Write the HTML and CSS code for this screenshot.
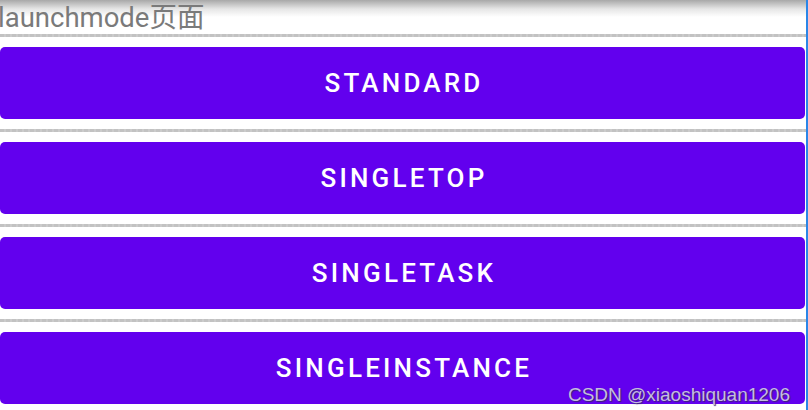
FILE: index.html
```html
<!DOCTYPE html>
<html lang="zh-CN">
<head>
  <meta charset="UTF-8">
  <title>launchmode页面</title>
  <link rel="stylesheet" href="styles.css">
</head>
<body>

<div class="screen">
  <div class="title">launchmode页面</div>

  <div class="line"></div>
  <button class="btn">STANDARD</button>
  <div class="line"></div>
  <button class="btn">SINGLETOP</button>
  <div class="line"></div>
  <button class="btn">SINGLETASK</button>
  <div class="line"></div>
  <button class="btn">SINGLEINSTANCE</button>

  <div class="mark">CSDN @xiaoshiquan1206</div>
</div>

</body>
</html>
```

FILE: styles.css
```css
body {
  margin: 0;
  background: #fff;
  overflow: hidden;
}
.screen {
  position: relative;
  width: 806px;
  height: 410px;
  border-right: 2px solid #2a86e8;
  display: flex;
  flex-direction: column;
  font-family: Roboto, "Noto Sans CJK SC", sans-serif;
}
.title {
  box-sizing: border-box;
  height: 35px;
  padding-top: 2px;
  line-height: 32px;
  font-size: 27.5px;
  color: #7a7a7a;
  text-indent: -2px;
  background: linear-gradient(#a8a8a8, #e6e6e6 9px, #fff 17px);
  white-space: nowrap;
}
.line {
  height: 3px;
  margin-bottom: 10px;
  background: repeating-linear-gradient(90deg, #c2c2c2 0 4px, #cbcbcb 4px 6px);
  flex-shrink: 0;
}
.btn {
  height: 72px;
  margin: 0 1px 10px 0;
  flex-shrink: 0;
  border: none;
  border-radius: 5px;
  background: #6200ee;
  color: #fff;
  font-family: Roboto, sans-serif;
  font-weight: 500;
  font-size: 26px;
  letter-spacing: 3.2px;
  padding: 0 0 0 3px;
  cursor: pointer;
}
.mark {
  position: absolute;
  right: 16px;
  bottom: 4px;
  font-family: "Liberation Sans", Arial, sans-serif;
  font-size: 19px;
  color: #c4bce0;
  text-shadow: 1px 1px 1px #3a2a70;
}
```
